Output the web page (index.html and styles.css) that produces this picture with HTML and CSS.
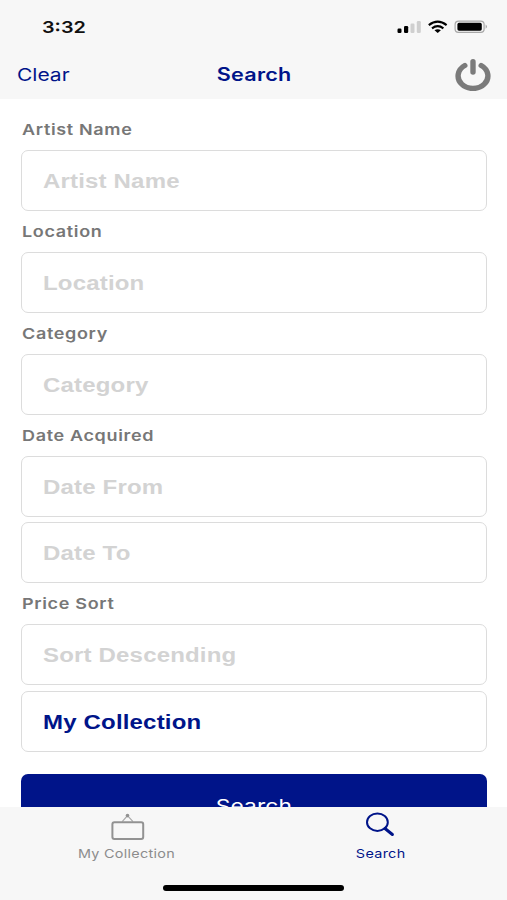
FILE: index.html
```html
<!DOCTYPE html>
<html lang="en">
  <head>
    <meta charset="UTF-8" />
    <meta name="viewport" content="width=device-width, initial-scale=1.0" />
    <title>Search</title>
    <link rel="stylesheet" href="styles.css">
  </head>
  <body>
    <div class="app">
      <header class="header">
        <div class="status-bar">
          <span class="time wide">3:32</span>
          <svg class="status-icons" width="92" height="16" viewBox="0 0 92 16">
            <rect x="0.5" y="8.5" width="4" height="4.5" rx="1.2" />
            <rect x="7" y="6" width="4.2" height="7" rx="1.2" />
            <rect x="13.5" y="3.5" width="4" height="9.5" rx="1.2" fill="#cfcfcf" />
            <rect x="19.8" y="1" width="4" height="12" rx="1.2" fill="#cfcfcf" />
            <g fill="none" stroke="#000" stroke-width="2.1">
              <path d="M31.8 5.2 Q40.7 -1.8 49.6 5.2" />
              <path d="M35 8.3 Q40.7 3.9 46.4 8.3" />
            </g>
            <path d="M37.5 10.3 Q40.7 8 43.9 10.3 L40.7 13 Z" />
            <rect x="58.1" y="1.1" width="29" height="11.3" rx="3.4" fill="none" stroke="#a8a8a8" stroke-width="1.2" />
            <rect x="60.4" y="2.8" width="24.4" height="7.9" rx="1.6" />
            <path d="M88.6 4.6 Q91.4 6.7 88.6 8.8 Z" fill="#a8a8a8" />
          </svg>
        </div>
        <nav class="nav-bar">
          <a class="clear" href="#"><span class="wide">Clear</span></a>
          <h1 class="title"><span class="wide">Search</span></h1>
          <button class="power" aria-label="Log out">
            <svg width="36" height="32" viewBox="0 0 36 32">
              <path d="M9.8 6.5 A14.9 12.5 0 1 0 26.2 6.5" />
              <path d="M18 2.8 V13" />
            </svg>
          </button>
        </nav>
      </header>

      <main class="search-form">
        <label class="label"><span class="wide">Artist Name</span></label>
        <div class="field"><span class="wide">Artist Name</span></div>
        <label class="label"><span class="wide">Location</span></label>
        <div class="field"><span class="wide">Location</span></div>
        <label class="label"><span class="wide">Category</span></label>
        <div class="field"><span class="wide">Category</span></div>
        <label class="label"><span class="wide">Date Acquired</span></label>
        <div class="field"><span class="wide">Date From</span></div>
        <div class="field stacked"><span class="wide">Date To</span></div>
        <label class="label"><span class="wide">Price Sort</span></label>
        <div class="field"><span class="wide">Sort Descending</span></div>
        <div class="field stacked selected"><span class="wide">My Collection</span></div>
        <button class="search-btn"><span class="wide">Search</span></button>
      </main>

      <footer class="tab-bar">
        <div class="tabs">
          <a class="tab" href="#">
            <svg width="36" height="30" viewBox="0 0 36 30">
              <path d="M13.2 10.6 L18.5 4.6 L24 10.6" fill="none" stroke="#aaa" stroke-width="1.2" />
              <circle cx="18.5" cy="4.6" r="1.8" fill="#929292" />
              <rect x="3.4" y="11.2" width="30.8" height="16.8" rx="2" fill="none" stroke="#929292" stroke-width="2" />
            </svg>
            <span class="wide">My Collection</span>
          </a>
          <a class="tab active" href="#">
            <svg width="36" height="30" viewBox="0 0 36 30">
              <ellipse cx="15.4" cy="11.2" rx="10.4" ry="8.7" fill="none" stroke="#001489" stroke-width="2" />
              <path d="M23 17.5 L30.4 23.5" stroke="#001489" stroke-width="3" stroke-linecap="round" />
            </svg>
            <span class="wide">Search</span>
          </a>
        </div>
        <div class="home-indicator"></div>
      </footer>
    </div>
  </body>
</html>
```
FILE: styles.css
```css
* {
  box-sizing: border-box;
}

body {
  margin: 0;
  font-family: Inter, sans-serif;
  background-color: #ffffff;
}

a {
  text-decoration: none;
}

button {
  border: none;
  padding: 0;
  font-family: inherit;
}

.app {
  display: flex;
  flex-direction: column;
  height: 900px;
  overflow: hidden;
}

/* Stretched lettering */
.wide {
  display: inline-block;
  white-space: nowrap;
  transform: scaleX(1.2);
  transform-origin: left center;
}

/* Header */
.header {
  flex: none;
  height: 99px;
  background-color: #f7f7f7;
}

.status-bar {
  display: flex;
  justify-content: space-between;
  height: 50px;
  padding: 16px 18px 0 42px;
}

.time {
  font-size: 16.5px;
  font-weight: 600;
  line-height: 23px;
  color: #111;
}

.status-icons {
  margin-top: 4px;
}

.nav-bar {
  display: grid;
  grid-template-columns: 1fr auto 1fr;
  align-items: center;
  height: 49px;
  padding: 0 16px 0 17px;
  color: #001489;
}

.clear {
  font-size: 17.5px;
  color: #001489;
}

.title {
  margin: 0;
  font-size: 18px;
  font-weight: 600;
  letter-spacing: 0.2px;
}

.title .wide,
.search-btn .wide,
.tab .wide {
  transform-origin: center;
}

.power {
  justify-self: end;
  height: 32px;
  background: none;
}

.power svg {
  display: block;
  fill: none;
  stroke: #7b7b7b;
  stroke-width: 5.4;
  stroke-linecap: round;
}

/* Form */
.search-form {
  flex: 1;
  min-height: 0;
  overflow: hidden;
  padding: 10.4px 20px 0 21px;
}

.label {
  display: block;
  height: 40.9px;
  line-height: 41px;
  padding-left: 0.5px;
  font-size: 15px;
  font-weight: 600;
  letter-spacing: 0.55px;
  color: #777;
}

.field {
  display: flex;
  align-items: center;
  height: 61px;
  padding: 2px 0 0 21px;
  border: 1.5px solid #dcdcdc;
  border-radius: 7px;
  font-family: "Liberation Sans", sans-serif;
  font-size: 20px;
  font-weight: 700;
  letter-spacing: 0.15px;
  color: #d3d3d3;
}

.stacked {
  margin-top: 5.4px;
}

.selected {
  color: #001489;
}

.search-btn {
  display: block;
  width: 100%;
  height: 62px;
  margin-top: 22px;
  padding-top: 4px;
  border-radius: 7px;
  background-color: #001489;
  color: #fff;
  font-size: 19px;
  letter-spacing: 0.1px;
}

/* Tab bar */
.tab-bar {
  flex: none;
  display: flex;
  flex-direction: column;
  align-items: center;
  justify-content: space-between;
  height: 93px;
  padding-bottom: 9px;
  background-color: #f7f7f7;
}

.tabs {
  display: flex;
  width: 100%;
}

.tab {
  display: flex;
  flex: 1;
  flex-direction: column;
  align-items: center;
  padding-top: 4px;
  font-size: 12px;
  font-weight: 400;
  line-height: 25px;
  letter-spacing: 0.25px;
  color: #8c8c8c;
}

.active {
  color: #001489;
}

.home-indicator {
  width: 181px;
  height: 6px;
  border-radius: 3px;
  background-color: #000;
}
```
